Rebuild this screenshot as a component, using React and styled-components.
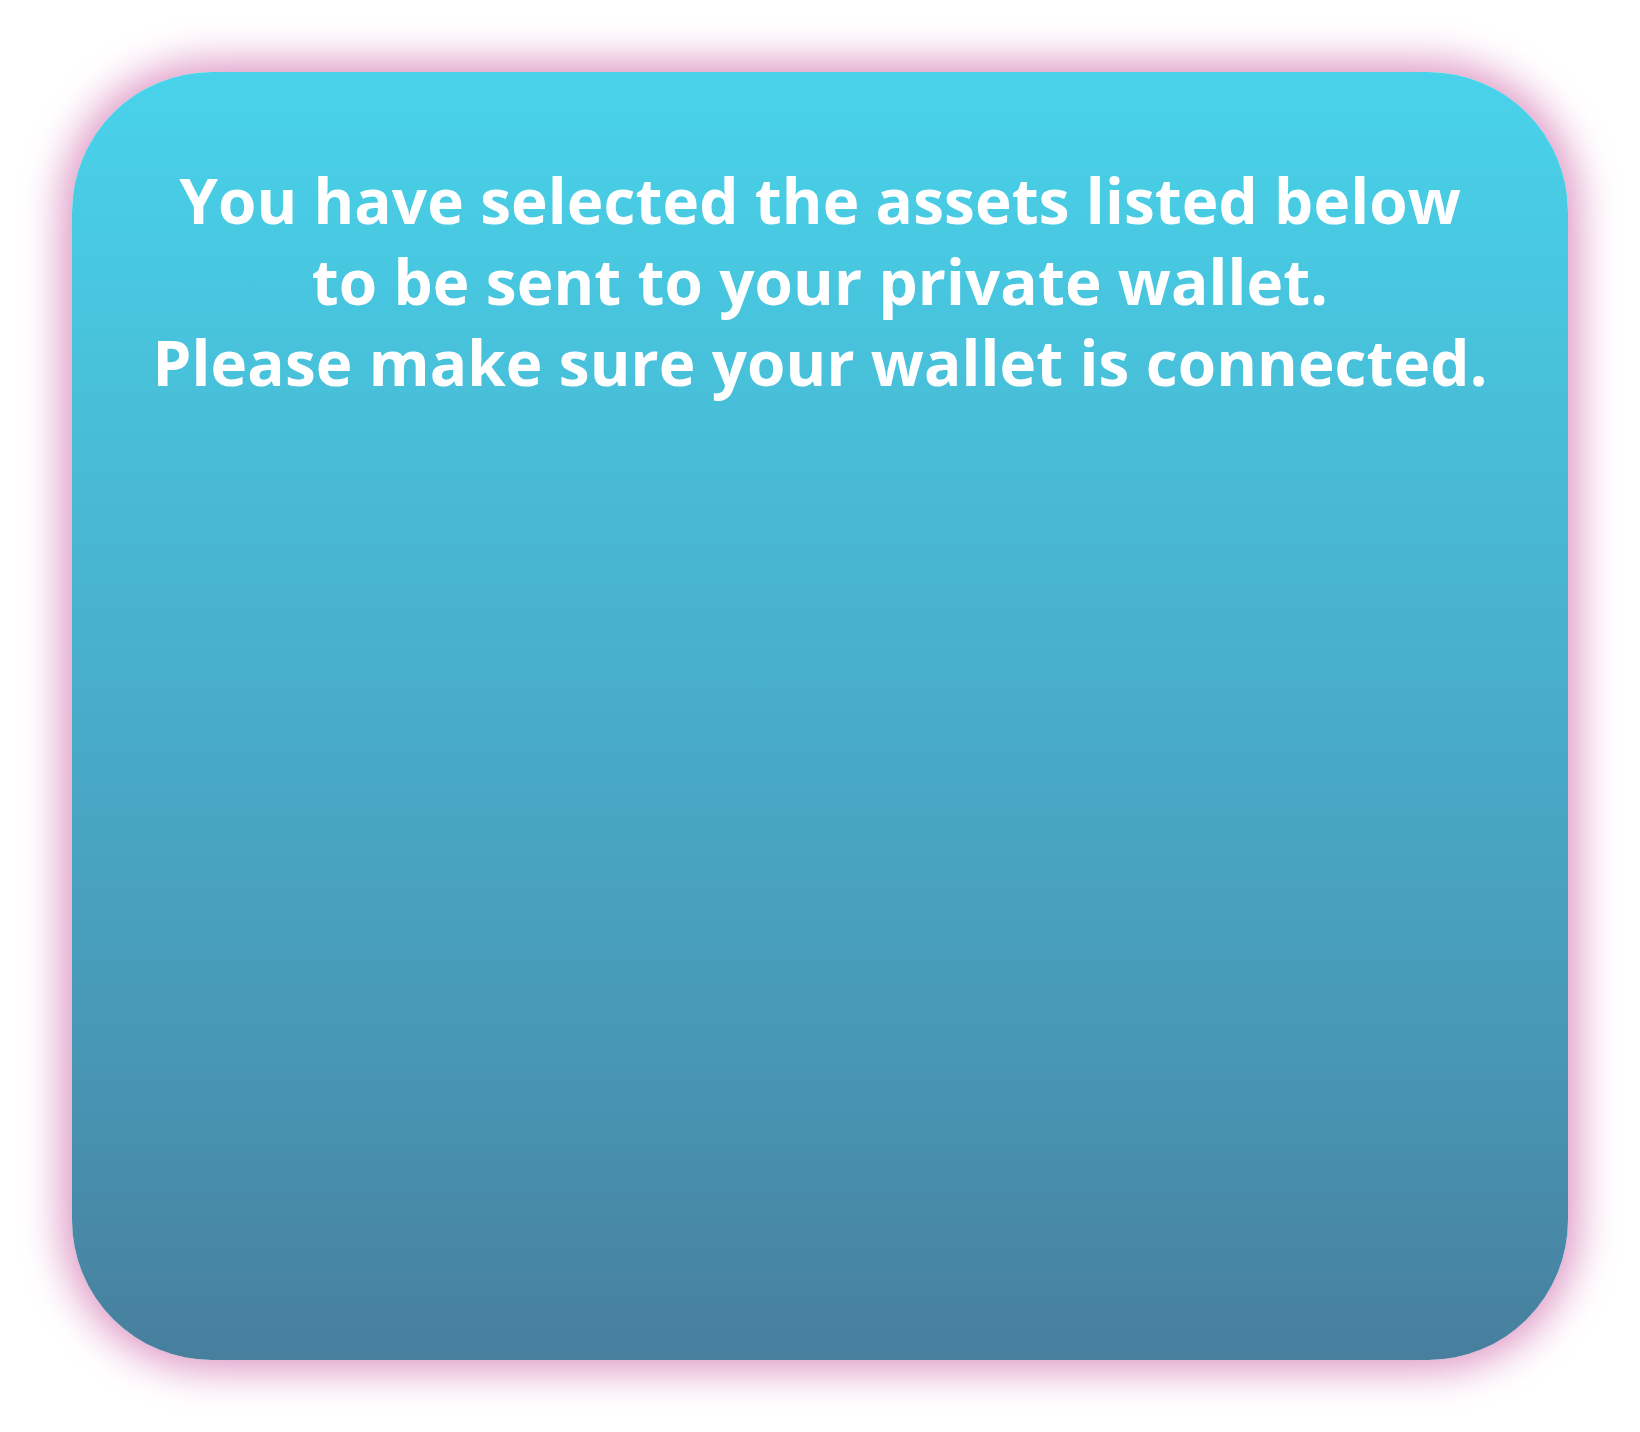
import React from 'react';
import styled, { createGlobalStyle } from 'styled-components';

const GlobalStyle = createGlobalStyle`
  html, body {
    margin: 0;
    padding: 0;
    background: #ffffff;
  }
  body {
    font-family: "Open Sans", "Noto Sans", sans-serif;
  }
`;

const Page = styled.div`
  width: 1640px;
  height: 1432px;
  padding: 72px;
  box-sizing: border-box;
  display: flex;
`;

const Card = styled.div`
  flex: 1;
  border-radius: 140px;
  background: linear-gradient(180deg, #48d3ea 0%, #48b4d0 40%, #4798b6 75%, #477f9d 100%);
  box-shadow: 0 0 40px 10px rgba(222, 150, 196, 1);
  display: flex;
  flex-direction: column;
  align-items: center;
  padding-top: 88px;
`;

const Message = styled.p`
  margin: 0;
  color: #ffffff;
  font-family: "Open Sans", "Noto Sans", sans-serif;
  font-weight: 700;
  font-size: 62px;
  line-height: 81px;
  text-align: center;
  letter-spacing: 0.1px;
`;

function App() {
  return (
    <>
      <GlobalStyle />
      <Page>
        <Card>
          <Message>
            You have selected the assets listed below
            <br />
            to be sent to your private wallet.
            <br />
            Please make sure your wallet is connected.
          </Message>
        </Card>
      </Page>
    </>
  );
}

export default App;
